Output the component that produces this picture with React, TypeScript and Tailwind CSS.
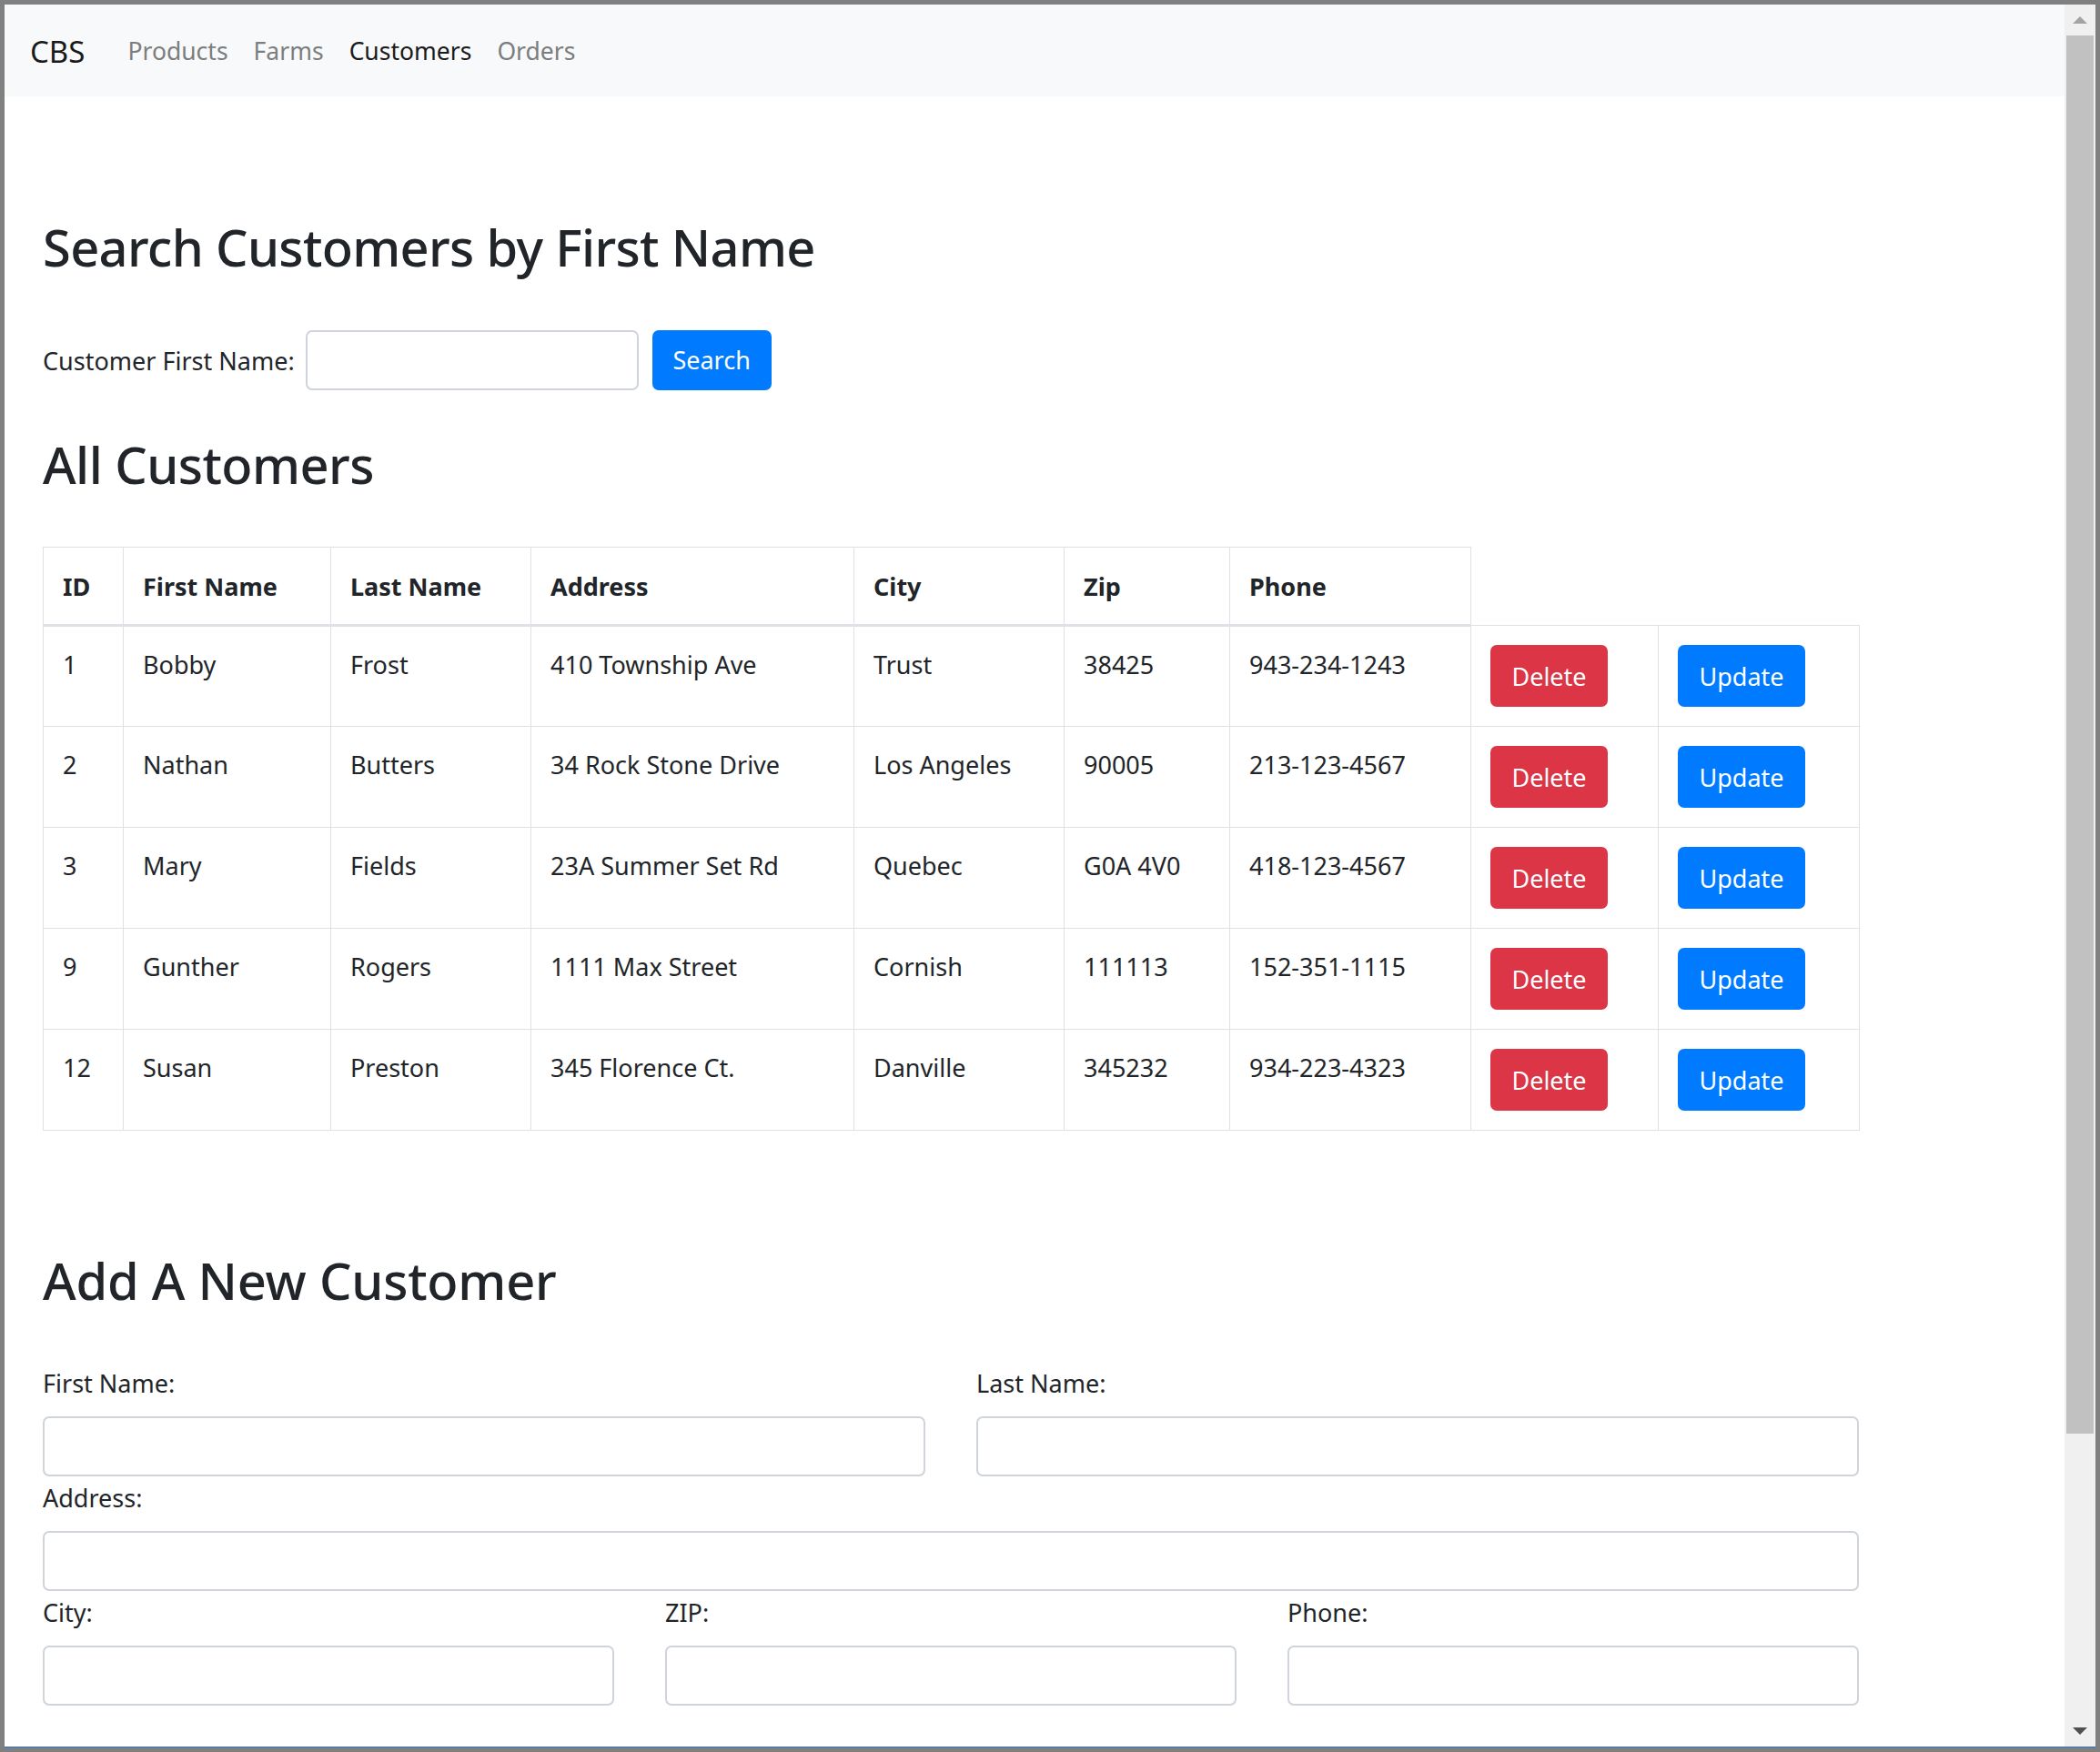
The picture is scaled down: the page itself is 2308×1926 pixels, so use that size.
import React from "react";

type Customer = {
  id: number;
  first: string;
  last: string;
  address: string;
  city: string;
  zip: string;
  phone: string;
};

const customers: Customer[] = [
  { id: 1, first: "Bobby", last: "Frost", address: "410 Township Ave", city: "Trust", zip: "38425", phone: "943-234-1243" },
  { id: 2, first: "Nathan", last: "Butters", address: "34 Rock Stone Drive", city: "Los Angeles", zip: "90005", phone: "213-123-4567" },
  { id: 3, first: "Mary", last: "Fields", address: "23A Summer Set Rd", city: "Quebec", zip: "G0A 4V0", phone: "418-123-4567" },
  { id: 9, first: "Gunther", last: "Rogers", address: "1111 Max Street", city: "Cornish", zip: "111113", phone: "152-351-1115" },
  { id: 12, first: "Susan", last: "Preston", address: "345 Florence Ct.", city: "Danville", zip: "345232", phone: "934-223-4323" },
];

const colWidths = [88, 228, 220, 355, 231, 182, 265, 206, 221];

function Field({ label }: { label: string }) {
  return (
    <div className="min-w-0 flex-1 pb-[3px]">
      <label className="mb-[16px] block text-[27px] leading-[41px]">{label}</label>
      <input type="text" className="block h-[66px] w-full rounded-[7px] border-2 border-[#ced4da] bg-white" />
    </div>
  );
}

function Scrollbar() {
  return (
    <div className="flex w-[34px] shrink-0 flex-col bg-[#f0f0f0]">
      <div className="flex h-[34px] items-center justify-center">
        <svg width="16" height="8" viewBox="0 0 16 8">
          <path d="M8 0 L16 8 L0 8 Z" fill="#a3a3a3" />
        </svg>
      </div>
      <div className="mx-[2px] h-[1537px] bg-[#c1c1c1]" />
      <div className="flex-1" />
      <div className="flex h-[34px] items-center justify-center">
        <svg width="16" height="8" viewBox="0 0 16 8">
          <path d="M0 0 L16 0 L8 8 Z" fill="#505050" />
        </svg>
      </div>
    </div>
  );
}

export default function App() {
  const th = "border border-[#dee2e6] border-b-[3px] px-[21px] pt-[22px] pb-[21px] text-left align-bottom font-bold leading-[41px]";
  const td = "border border-[#dee2e6] px-[21px] py-[21px] align-top leading-[41px]";
  return (
    <div className="h-[1926px] w-[2308px] overflow-hidden bg-[#808080] p-[5px] font-['Noto_Sans',sans-serif] text-[#212529]">
      <div className="flex h-full flex-col">
        <div className="flex min-h-0 flex-1">
          <div className="min-w-0 flex-1 overflow-hidden bg-white">
            <nav className="flex h-[101px] items-center bg-[#f8f9fa] px-[28px] pt-[3px]">
              <span className="mr-[33px] text-[33px] text-[#1a1a1a]">CBS</span>
              <a className="px-[14px] text-[26.5px] text-[#7c7d7d]">Products</a>
              <a className="px-[14px] text-[26.5px] text-[#7c7d7d]">Farms</a>
              <a className="px-[14px] text-[26.5px] text-[#1a1a1a]">Customers</a>
              <a className="px-[14px] text-[26.5px] text-[#7c7d7d]">Orders</a>
            </nav>

            <div className="w-[2038px] pl-[42px] text-[27px]">
              <h1 className="mt-[132px] text-[56px] font-medium leading-[67px] tracking-[-0.012em]">
                Search Customers by First Name
              </h1>

              <div className="mt-[58px] flex h-[66px] items-center">
                <label className="mr-[12px] leading-[41px]">Customer First Name:</label>
                <input type="text" className="h-[66px] w-[366px] rounded-[7px] border-2 border-[#ced4da] bg-white" />
                <button className="ml-[15px] h-[66px] w-[131px] rounded-[7px] bg-[#007bff] text-[27px] text-white">
                  Search
                </button>
              </div>

              <h2 className="mt-[48px] text-[56px] font-medium leading-[67px] tracking-[-0.01em]">All Customers</h2>

              <table className="mt-[57px] w-[1996px] table-fixed border-collapse">
                <colgroup>
                  {colWidths.map((w, i) => (
                    <col key={i} style={{ width: w }} />
                  ))}
                </colgroup>
                <thead>
                  <tr>
                    <th className={th}>ID</th>
                    <th className={th}>First Name</th>
                    <th className={th}>Last Name</th>
                    <th className={th}>Address</th>
                    <th className={th}>City</th>
                    <th className={th}>Zip</th>
                    <th className={th}>Phone</th>
                  </tr>
                </thead>
                <tbody>
                  {customers.map((c) => (
                    <tr key={c.id}>
                      <td className={td}>{c.id}</td>
                      <td className={td}>{c.first}</td>
                      <td className={td}>{c.last}</td>
                      <td className={td}>{c.address}</td>
                      <td className={td}>{c.city}</td>
                      <td className={td}>{c.zip}</td>
                      <td className={td}>{c.phone}</td>
                      <td className={td}>
                        <button className="block h-[68px] w-[129px] rounded-[7px] bg-[#dc3545] text-[27px] text-white">
                          Delete
                        </button>
                      </td>
                      <td className={td}>
                        <button className="block h-[68px] w-[140px] rounded-[7px] bg-[#007bff] text-[27px] text-white">
                          Update
                        </button>
                      </td>
                    </tr>
                  ))}
                </tbody>
              </table>

              <h2 className="mt-[131px] text-[56px] font-medium leading-[67px] tracking-[-0.004em]">
                Add A New Customer
              </h2>

              <div className="mt-[59px] w-[1996px]">
                <div className="flex gap-[56px]">
                  <Field label="First Name:" />
                  <Field label="Last Name:" />
                </div>
                <Field label="Address:" />
                <div className="flex gap-[56px]">
                  <Field label="City:" />
                  <Field label="ZIP:" />
                  <Field label="Phone:" />
                </div>
              </div>
            </div>
          </div>
          <Scrollbar />
        </div>
        <div className="h-px shrink-0 bg-[#2a76c6]" />
      </div>
    </div>
  );
}
